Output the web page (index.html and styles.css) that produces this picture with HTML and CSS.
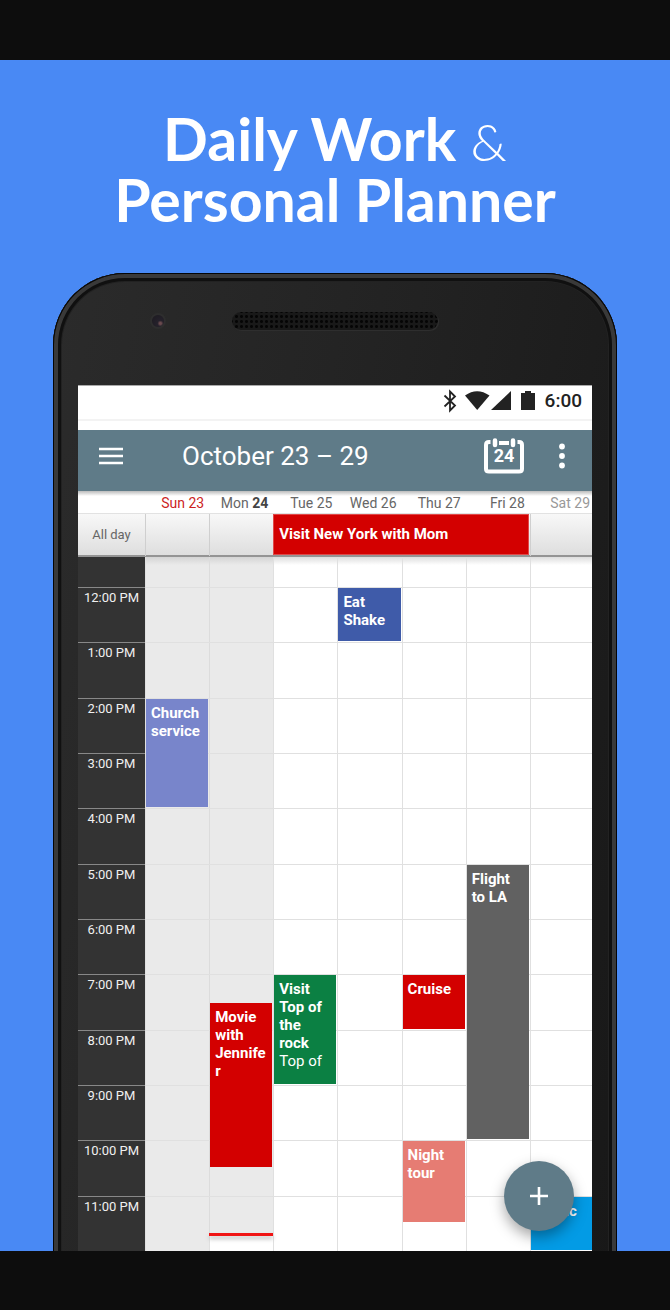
FILE: index.html
```html
<!DOCTYPE html>
<html lang="en">
<head>
<meta charset="utf-8">
<meta name="viewport" content="width=device-width, initial-scale=1">
<title>Daily Work &amp; Personal Planner</title>
<link rel="stylesheet" href="styles.css">
</head>
<body>
<main class="promo">
  <h1 class="headline">Daily Work <span class="amp">&amp;</span><br>Personal Planner</h1>
  <div class="phone">
    <div class="bezel">
      <span class="camera"></span>
      <span class="speaker"></span>
      <span></span>
    </div>
    <div class="screen">
      <div class="status">
        <svg width="14" height="24" viewBox="0 0 14 24" fill="none" stroke="#222" stroke-width="1.8"><path d="M1.5 6.500 12 16.500 7 21.500V2.500L12 7.500 1.500 17.500"/></svg>
        <svg class="wifi" width="25" height="20" viewBox="0 0 25 20" fill="#222"><path d="M0 4.500Q12-4 24.500 4.500L12.200 19Z"/></svg>
        <svg class="signal" width="20" height="20" viewBox="0 0 20 20" fill="#222"><path d="M20 0V19H0Z"/></svg>
        <svg class="battery" width="14" height="20" viewBox="0 0 14 20" fill="#222"><path d="M0 2H4V0H10V2H14V19H0Z"/></svg>
        <time class="clock">6:00</time>
      </div>
      <header class="appbar">
        <button class="icon-button" aria-label="Menu"><svg width="24" height="18" viewBox="0 0 24 18" stroke="#fff" stroke-width="2.500"><path d="M0 2H24M0 9H24M0 16H24"/></svg></button>
        <h2 class="range">October 23 – 29</h2>
        <button class="icon-button today" aria-label="Today"><svg width="40" height="36" viewBox="0 0 40 36" fill="none" stroke="#fff"><path d="M6.500 4H5Q2 4 2 7V31Q2 33.500 5 33.500H35Q38 33.500 38 31V7Q38 4 35 4H33.500" stroke-width="4"/><path d="M15 5H25" stroke-width="4"/><path d="M11 2.500V7M29 2.500V7" stroke-width="4.500" stroke-linecap="round"/></svg><span class="today-number">24</span></button>
        <button class="icon-button" aria-label="More options"><svg width="6" height="26" viewBox="0 0 6 26" fill="#fff"><circle cx="3" cy="3.500" r="2.900"/><circle cx="3" cy="13" r="2.900"/><circle cx="3" cy="22.500" r="2.900"/></svg></button>
      </header>
      <div class="columns days">
        <span></span>
        <span class="sunday">Sun 23</span>
        <span>Mon <b>24</b></span>
        <span>Tue 25</span>
        <span>Wed 26</span>
        <span>Thu 27</span>
        <span>Fri 28</span>
        <span class="saturday">Sat 29</span>
      </div>
      <div class="columns allday">
        <span class="allday-label">All day</span>
        <span class="slot"></span>
        <span class="slot"></span>
        <div class="banner">Visit New York with Mom</div>
        <span class="slot"></span>
      </div>
      <div class="columns grid">
        <div class="gutter"></div>
        <div class="day d1 past"></div>
        <div class="day d2"></div>
        <div class="elapsed"></div>
        <div class="day d3"></div>
        <div class="day d4"></div>
        <div class="day d5"></div>
        <div class="day d6"></div>
        <div class="day d7"></div>
        <div class="hour h12"><time>12:00 PM</time></div>
        <div class="hour h13"><time>1:00 PM</time></div>
        <div class="hour h14"><time>2:00 PM</time></div>
        <div class="hour h15"><time>3:00 PM</time></div>
        <div class="hour h16"><time>4:00 PM</time></div>
        <div class="hour h17"><time>5:00 PM</time></div>
        <div class="hour h18"><time>6:00 PM</time></div>
        <div class="hour h19"><time>7:00 PM</time></div>
        <div class="hour h20"><time>8:00 PM</time></div>
        <div class="hour h21"><time>9:00 PM</time></div>
        <div class="hour h22"><time>10:00 PM</time></div>
        <div class="hour h23"><time>11:00 PM</time></div>
        <div class="event church">Church service</div>
        <div class="event movie">Movie with Jennifer</div>
        <div class="event visit">Visit Top of the rock <span class="place">Top of</span></div>
        <div class="event shake">Eat Shake</div>
        <div class="event cruise">Cruise</div>
        <div class="event tour">Night tour</div>
        <div class="event flight">Flight to LA</div>
        <div class="event music">Music</div>
        <div class="now"></div>
      </div>
      <button class="fab" aria-label="Add event"><svg width="18" height="18" viewBox="0 0 18 18" stroke="#fff" stroke-width="2.600"><path d="M9 0V18M0 9H18"/></svg></button>
    </div>
  </div>
</main>
</body>
</html>
```
FILE: styles.css
```css
* { box-sizing: border-box; }
body {
  margin: 0;
  min-height: 100vh;
  padding: 60px 0 59px;
  background: #0d0d0d;
  font-family: Roboto, "Liberation Sans", sans-serif;
  display: flex;
  flex-direction: column;
}
.promo {
  flex: 1;
  background: #4989f4;
  display: flex;
  flex-direction: column;
  overflow: hidden;
}
.headline {
  margin: 0;
  padding: 48px 0 43px;
  color: #fff;
  font: 700 59px/61px Lato, "Open Sans", sans-serif;
  text-align: center;
}
.amp { font-size: 52px; font-weight: 300; line-height: 52px; }
.phone {
  flex: 1;
  margin: 0 53px -12px;
  padding: 0 25px 12px;
  display: flex;
  flex-direction: column;
  border-radius: 72px 72px 0 0;
  background: linear-gradient(100deg, #2b2b2b, #242424 40%, #181818);
  box-shadow: inset 0 0 0 1px #050505, inset 0 0 0 5px #393939, inset 0 0 0 8px #101010, inset 0 0 0 9px #222;
}
.bezel {
  height: 112px;
  padding-bottom: 17px;
  display: grid;
  grid-template-columns: 1fr 206px 1fr;
  align-items: center;
}
.camera {
  width: 16px;
  height: 16px;
  margin-left: 72px;
  border: 2px solid #2e2e2e;
  border-radius: 50%;
  background: radial-gradient(circle at 70% 70%, #6a4a4e 0 1px, #25212b 3px, #1c1a20);
}
.speaker {
  height: 18px;
  border-radius: 9px;
  background: radial-gradient(circle, #050505 1px, transparent 2px) 2px 2px / 5px 5px, #191919;
  box-shadow: 1px 1px 1px #303030;
}
.screen {
  flex: 1;
  position: relative;
  display: flex;
  flex-direction: column;
  background: #fff;
}
.status {
  height: 45px;
  padding: 0 10px 15px 0;
  display: flex;
  align-items: center;
  justify-content: flex-end;
  color: #222;
  background: linear-gradient(#fff 33px, #f3f3f3 33px 35px, #fff 35px);
  border-top: 1px solid #aaa;
}
.wifi { margin-left: 8px; }
.signal { margin-left: 1px; }
.battery { margin-left: 10px; }
.clock { margin-left: 10px; font-size: 19px; font-weight: 500; line-height: 24px; }
.appbar {
  height: 61px;
  padding: 0 27px 10px 21px;
  display: flex;
  align-items: center;
  background: #5f7b88;
  color: #fff;
}
.icon-button {
  margin: 0;
  padding: 0;
  border: 0;
  background: none;
  color: inherit;
  font: inherit;
  display: grid;
  place-items: center;
}
.icon-button svg, .today-number { grid-area: 1 / 1; }
.range { flex: 1; margin: 0 0 0 59px; font-size: 26px; font-weight: 400; line-height: 32px; }
.today { margin-right: 35px; }
.today-number { font-size: 18px; font-weight: 700; line-height: 20px; }
.columns { display: grid; grid-template-columns: 67px repeat(6, 64fr) 62fr; }
.days {
  height: 22px;
  line-height: 24px;
  font-size: 14px;
  color: #666;
  text-align: right;
  white-space: nowrap;
  background: linear-gradient(#bbb, #fff 5px);
}
.days span { padding-right: 5px; }
.days .sunday { color: #cc1f1f; }
.days .saturday { color: #999; padding-right: 2px; }
.days b { color: #444; }
.allday {
  height: 44px;
  background: linear-gradient(#f8f8f8, #dedede);
  border-top: 1px solid #e2e2e2;
  border-bottom: 2px solid #949494;
}
.allday-label { color: #666; font-size: 13px; line-height: 41px; text-align: center; }
.slot { border-left: 1px solid #cfcfcf; }
.banner {
  grid-column: span 4;
  margin: 0 1px 1px 0;
  padding: 0 5px;
  background: #d30000;
  border: 1px solid #e04848;
  color: #fff;
  font-size: 15px;
  font-weight: 700;
  line-height: 39px;
}
.grid {
  flex: 1;
  grid-template-rows: 30px repeat(72, 1fr);
}
.gutter { grid-area: 1 / 1 / -1 / 2; background: #333; }
.day { grid-row: 1 / -1; border-left: 1px solid #e0e0e0; background: linear-gradient(#ddd, transparent 8px); }
.d1 { grid-column: 2; }
.d2 { grid-column: 3; }
.d3 { grid-column: 4; }
.d4 { grid-column: 5; }
.d5 { grid-column: 6; }
.d6 { grid-column: 7; }
.d7 { grid-column: 8; }
.past { background: linear-gradient(#d4d4d4, #eaeaea 8px); }
.elapsed { grid-area: 1 / 3 / 72 / 4; border-left: 1px solid #dcdcdc; background: linear-gradient(#d4d4d4, #eaeaea 8px); }
.hour {
  grid-column: 1 / -1;
  display: grid;
  grid-template-columns: 67px 1fr;
  border-top: 1px solid #e0e0e0;
}
.hour time {
  margin-top: -1px;
  border-top: 1px solid #888;
  color: #f0f0f0;
  font-size: 13px;
  line-height: 20px;
  text-align: center;
}
.h12 { grid-row: 2 / span 6; }
.h13 { grid-row: 8 / span 6; }
.h14 { grid-row: 14 / span 6; }
.h15 { grid-row: 20 / span 6; }
.h16 { grid-row: 26 / span 6; }
.h17 { grid-row: 32 / span 6; }
.h18 { grid-row: 38 / span 6; }
.h19 { grid-row: 44 / span 6; }
.h20 { grid-row: 50 / span 6; }
.h21 { grid-row: 56 / span 6; }
.h22 { grid-row: 62 / span 6; }
.h23 { grid-row: 68 / span 6; }
.event {
  min-height: 0;
  margin: 1px;
  padding: 5px;
  color: #fff;
  font-size: 15px;
  font-weight: 700;
  line-height: 18px;
  overflow: hidden;
  overflow-wrap: anywhere;
}
.place { display: block; font-weight: 400; }
.church { grid-area: 14 / 2 / span 12; background: #7885cb; }
.movie { grid-area: 47 / 3 / span 18; background: #d30000; }
.visit { grid-area: 44 / 4 / span 12; background: #0b8043; }
.shake { grid-area: 2 / 5 / span 6; background: #3f5ba9; }
.cruise { grid-area: 44 / 6 / span 6; background: #d30000; }
.tour { grid-area: 62 / 6 / span 9; background: #e67c73; }
.flight { grid-area: 32 / 7 / span 30; background: #616161; }
.music { grid-area: 68 / 8 / span 6; margin-right: 0; background: #039be5; }
.now { grid-area: 72 / 3; height: 3px; background: #f01414; box-shadow: 0 3px 4px #bbb; }
.fab {
  position: absolute;
  right: 18px;
  bottom: 20px;
  width: 70px;
  height: 70px;
  padding: 0;
  border: 0;
  border-radius: 50%;
  background: #5f7b88;
  display: grid;
  place-items: center;
  box-shadow: 0 6px 14px rgba(0, 0, 0, .35);
}
```
